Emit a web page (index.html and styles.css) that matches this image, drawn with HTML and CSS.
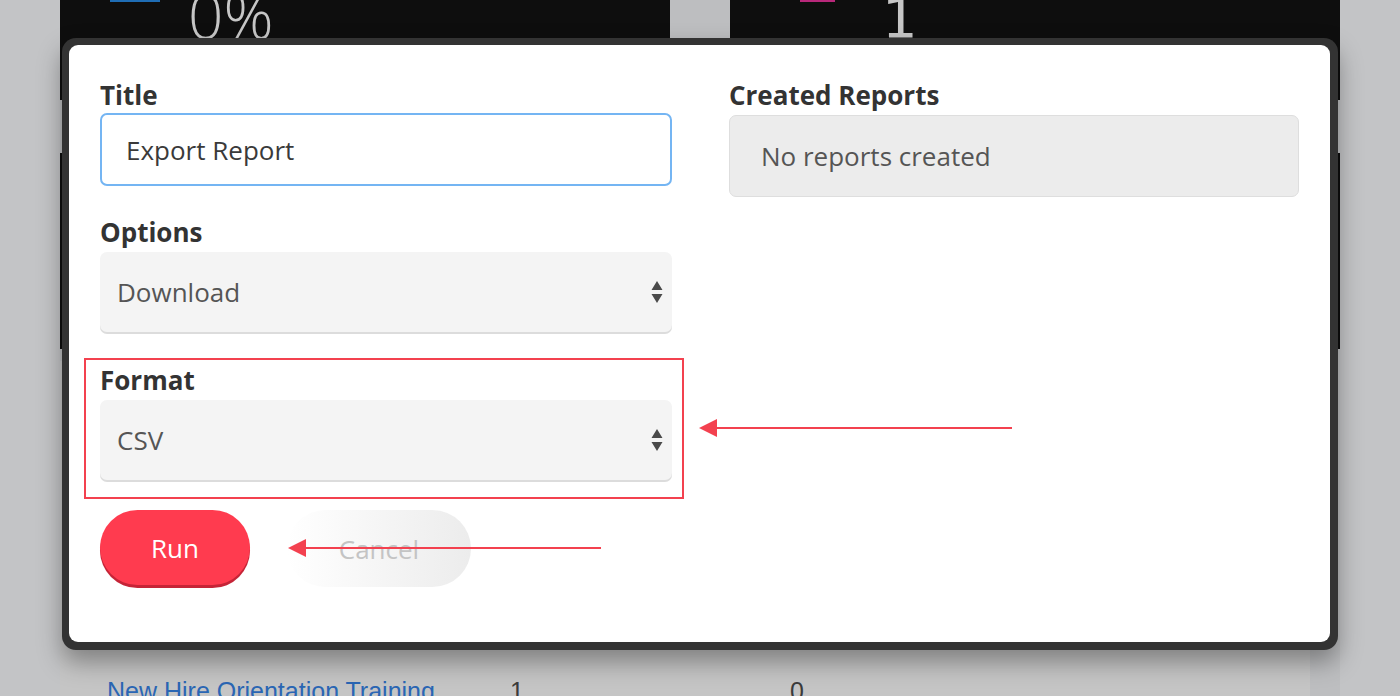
FILE: index.html
```html
<!doctype html>
<html>
<head>
<meta charset="utf-8">
<title>Export Report</title>
<link rel="stylesheet" href="styles.css">
</head>
<body>
<!-- dashboard behind the dialog -->
<div class="page">
  <div class="tiles tiles-top">
    <div class="tile"><span class="tile-mark mark-blue"></span><span class="tile-num">0%</span></div>
    <div class="tile"><span class="tile-mark mark-pink"></span><span class="tile-num num-right">1</span></div>
  </div>
  <div class="tiles tiles-mid">
    <div class="tile"></div>
    <div class="tile"></div>
  </div>
  <div class="card">
    <div class="card-row">
      <a href="javascript:;">New Hire Orientation Training</a>
      <span>1</span>
      <span>0</span>
    </div>
  </div>
</div>

<!-- export dialog -->
<div class="modal">
  <div class="modal-body">
    <div class="col">
      <div class="field">
        <div class="field-label label-top">Title</div>
        <div class="input">Export Report</div>
      </div>
      <div class="field">
        <div class="field-label">Options</div>
        <div class="select">
          <span>Download</span>
          <svg class="caret" width="12" height="24" viewBox="0 0 12 24"><path d="M6 1 L11.5 10 H0.5 Z M6 23 L11.5 14 H0.5 Z" fill="#4a4a4a"/></svg>
        </div>
      </div>
      <div class="field">
        <div class="field-label">Format</div>
        <div class="select">
          <span>CSV</span>
          <svg class="caret" width="12" height="24" viewBox="0 0 12 24"><path d="M6 1 L11.5 10 H0.5 Z M6 23 L11.5 14 H0.5 Z" fill="#4a4a4a"/></svg>
        </div>
      </div>
      <div class="buttons">
        <a class="btn btn-run" href="javascript:;">Run</a>
        <a class="btn btn-cancel" href="javascript:;">Cancel</a>
      </div>
    </div>
    <div class="col">
      <div class="field">
        <div class="field-label">Created Reports</div>
        <div class="reports-box">No reports created</div>
      </div>
    </div>
  </div>
</div>

<!-- annotations -->
<div class="note-box"></div>
<div class="note-arrow arrow-format"></div>
<div class="note-arrow arrow-run"></div>
</body>
</html>
```

FILE: styles.css
```css
*{
	margin:0;
	padding:0;
	box-sizing:border-box;
}
body
{
	width:1400px;
	height:696px;
	overflow:hidden;
	position:relative;
	background-color:#c3c4c6;
	font-family:"Open Sans","Liberation Sans",sans-serif;
}
/* background page */
.page
{
	margin-left:60px;
	width:1280px;
	height:696px;
	overflow:hidden;
	background-color:#bdbec0;
}
.tiles
{
	display:grid;
	grid-template-columns:610px 610px;
	column-gap:60px;
}
.tile
{
	background-color:#0e0e0e;
	position:relative;
	overflow:hidden;
}
.tiles-top .tile
{
	height:100px;
}
.tiles-mid
{
	margin-top:53px;
}
.tiles-mid .tile
{
	height:196px;
}
.tile-mark
{
	position:absolute;
	top:0;
	height:2px;
}
.mark-blue
{
	left:50px;
	width:50px;
	background-color:#1f6db5;
}
.mark-pink
{
	left:70px;
	width:35px;
	background-color:#b8287a;
}
.tile-num
{
	display:block;
	margin:-16px 0 0 128px;
	font-size:62px;
	line-height:1;
	font-weight:300;
	color:#c6c6c6;
}
.num-right
{
	margin:-10px 0 0 152px;
	font-size:56px;
	font-family:"DejaVu Sans",sans-serif;
	font-weight:normal;
}
.card
{
	margin:12px 30px 0 0;
	height:335px;
	background-color:#c5c5c5;
	padding-top:312px;
}
.card-row
{
	display:grid;
	grid-template-columns:403px 280px auto;
	padding-left:47px;
	font-family:"Liberation Sans",sans-serif;
	font-size:25px;
	line-height:36px;
	color:#3b3b3b;
}
.card-row a
{
	color:#2a66b4;
	text-decoration:none;
}
/* dialog */
.modal
{
	position:absolute;
	left:62px;
	top:38px;
	width:1276px;
	height:612px;
	padding:7px 8px 8px 7px;
	background-color:#333;
	border-radius:14px;
	box-shadow:0 12px 24px rgba(0,0,0,0.35);
}
.modal-body
{
	height:100%;
	background-color:#fff;
	border-radius:9px;
	display:grid;
	grid-template-columns:572px 570px;
	column-gap:57px;
	padding:36px 0 0 31px;
}
.col
{
	display:flex;
	flex-direction:column;
}
.field + .field
{
	margin-top:32px;
}
.field-label
{
	font-size:26px;
	line-height:28px;
	font-weight:700;
	color:#333;
	margin-bottom:6px;
}
.label-top
{
	margin-bottom:4px;
}
.input
{
	height:73px;
	border:2px solid #74b5f3;
	border-radius:7px;
	padding-left:24px;
	display:flex;
	align-items:center;
	font-size:26px;
	color:#3a3a3a;
}
.select
{
	height:80px;
	margin-bottom:2px;
	background-color:#f4f4f4;
	border-radius:7px;
	box-shadow:0 2px 0 #dcdcdc;
	display:flex;
	align-items:center;
	justify-content:space-between;
	padding:0 9px 0 17px;
	font-size:26px;
	color:#555;
}
.buttons
{
	display:flex;
	column-gap:37px;
	margin-top:28px;
}
.btn
{
	display:flex;
	align-items:center;
	justify-content:center;
	height:75px;
	border-radius:40px;
	font-size:26px;
	text-decoration:none;
}
.btn-run
{
	width:150px;
	background-color:#ff3b4f;
	box-shadow:0 3px 0 #c52437;
	color:#fff;
}
.btn-cancel
{
	width:184px;
	height:77px;
	background:linear-gradient(90deg,#fff,#ececec);
	color:#c4c4c4;
}
.reports-box
{
	height:82px;
	background-color:#ececec;
	border:1px solid #dedede;
	border-radius:7px;
	padding-left:31px;
	display:flex;
	align-items:center;
	font-size:26px;
	color:#555;
}
/* annotations */
.note-box
{
	position:absolute;
	left:84px;
	top:358px;
	width:600px;
	height:141px;
	border:2px solid #f3414f;
}
.note-arrow
{
	position:absolute;
	height:2px;
	background-color:#f3414f;
}
.note-arrow::before
{
	content:"";
	position:absolute;
	left:-17px;
	top:-8px;
	border-right:18px solid #f3414f;
	border-top:9px solid transparent;
	border-bottom:9px solid transparent;
}
.arrow-format
{
	left:716px;
	top:427px;
	width:296px;
}
.arrow-run
{
	left:305px;
	top:547px;
	width:296px;
}
```
